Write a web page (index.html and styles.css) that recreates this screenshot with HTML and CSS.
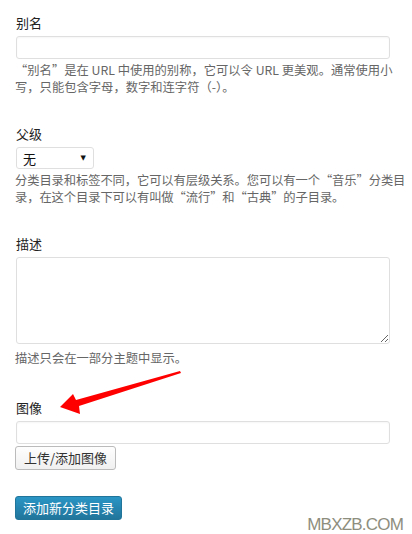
FILE: index.html
```html
<!DOCTYPE html>
<html lang="zh-CN">
<head>
  <meta charset="UTF-8" />
  <meta name="viewport" content="width=device-width, initial-scale=1" />
  <title>添加新分类目录</title>
  <link rel="stylesheet" href="styles.css">
</head>
<body>

<form class="term-form">
  <div class="form-field">
    <label for="slug">别名</label>
    <input type="text" id="slug" name="slug" class="text-input" />
    <p class="hint">“别名”是在 URL 中使用的别称，它可以令 URL 更美观。通常使用小写，只能包含字母，数字和连字符（-）。</p>
  </div>

  <div class="form-field">
    <label for="parent">父级</label>
    <span class="select-wrap">
      <select id="parent" name="parent">
        <option>无</option>
      </select>
    </span>
    <p class="hint hint-tight">分类目录和标签不同，它可以有层级关系。您可以有一个“音乐”分类目录，在这个目录下可以有叫做“流行”和“古典”的子目录。</p>
  </div>

  <div class="form-field desc-field">
    <label for="description">描述</label>
    <textarea id="description" name="description" class="text-area"></textarea>
    <p class="hint">描述只会在一部分主题中显示。</p>
  </div>

  <div class="form-field image-field">
    <label for="image">图像</label>
    <input type="text" id="image" name="image" class="text-input" />
    <button type="button" class="button">上传/添加图像</button>

    <!-- red annotation arrow pointing at the label -->
    <svg class="annot-arrow" width="126" height="46" viewBox="0 0 126 46">
      <path d="M123 1 L19 30 L16 24 L3 37 L23 44 L22 36 L124 3 Z" fill="#f00" />
    </svg>
  </div>

  <button type="submit" class="button button-primary">添加新分类目录</button>
</form>

<div class="watermark">MBXZB.COM</div>

</body>
</html>
```

FILE: styles.css
```css
/* Base */
body {
  margin: 0;
  background: #fff;
  font-family: "Noto Sans CJK SC", "Liberation Sans", sans-serif;
  font-size: 13px;
  color: #333;
}

.term-form {
  width: 390px;
  padding: 14px 0 0 16px;
}

/* Fields */
.form-field {
  margin-bottom: 30px;
}

.form-field label {
  display: block;
  font-size: 13px;
  line-height: 18px;
  color: #222;
  margin-bottom: 4px;
}

.text-input {
  display: block;
  box-sizing: border-box;
  width: 374px;
  height: 23px;
  margin: 0;
  border: 1px solid #dfdfdf;
  border-radius: 3px;
  background: #fff;
  box-shadow: inset 0 1px 2px rgba(0, 0, 0, 0.04);
}

.text-area {
  display: block;
  box-sizing: border-box;
  width: 374px;
  height: 87px;
  margin: 0;
  border: 1px solid #dfdfdf;
  border-radius: 3px;
  background: #fff;
}

.hint {
  margin: 3px 0 0 -1px;
  font-size: 12.3px;
  line-height: 16.5px;
  color: #666;
}

.hint-tight {
  letter-spacing: -0.1px;
}

.desc-field {
  margin-bottom: 32px;
}

.desc-field .hint {
  margin-top: 6px;
}

/* Select */
.select-wrap {
  position: relative;
  display: block;
  width: 78px;
}

.select-wrap select {
  -webkit-appearance: none;
  appearance: none;
  display: block;
  box-sizing: border-box;
  width: 78px;
  height: 22px;
  padding: 0 0 0 6px;
  border: 1px solid #dfdfdf;
  border-radius: 3px;
  background: #fff;
  font-family: "Noto Sans CJK SC", sans-serif;
  font-size: 13px;
  color: #111;
}

.select-wrap::after {
  content: "▼";
  position: absolute;
  right: 8px;
  top: 6px;
  font-family: "DejaVu Sans", sans-serif;
  font-size: 7px;
  line-height: 10px;
  color: #111;
  pointer-events: none;
}

/* Image field + annotation */
.image-field {
  position: relative;
  margin-bottom: 26px;
}

.annot-arrow {
  position: absolute;
  left: 41px;
  top: -29px;
}

/* Buttons */
.button {
  display: block;
  box-sizing: border-box;
  height: 24px;
  margin: 2px 0 0 -1px;
  padding: 0 8px;
  border: 1px solid #bbb;
  border-radius: 3px;
  background: linear-gradient(#fefefe, #f0f0f0);
  font-family: "Noto Sans CJK SC", sans-serif;
  font-size: 13px;
  line-height: 20px;
  color: #333;
}

.button-primary {
  margin-top: 0;
  padding: 0 7px;
  border-color: #21759b;
  background: linear-gradient(#2a95c5, #21759b);
  color: #fff;
}

/* Watermark */
.watermark {
  position: absolute;
  right: 9px;
  top: 515px;
  font-family: "Liberation Sans", sans-serif;
  font-size: 17px;
  letter-spacing: -0.8px;
  color: #8e8e7e;
}
```
